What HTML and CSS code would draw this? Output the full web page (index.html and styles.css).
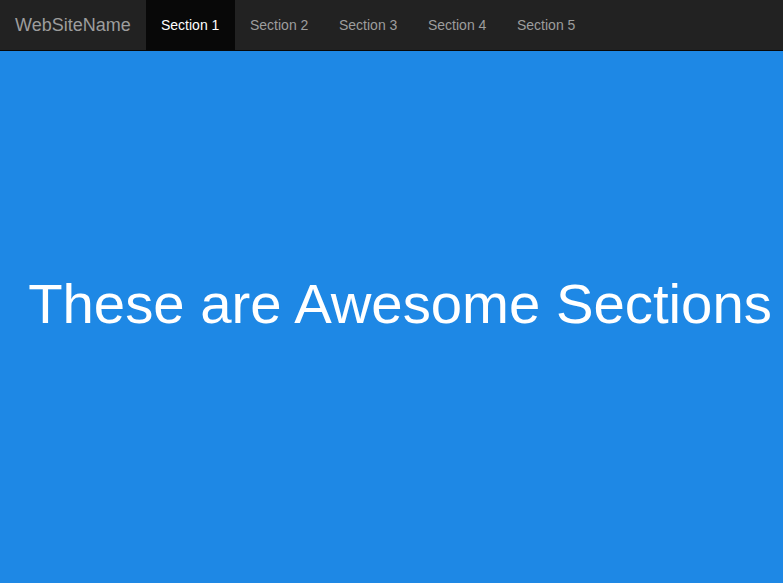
FILE: index.html
```html
<!DOCTYPE html>
<html>
<head>
<meta charset="utf-8">
<link rel="stylesheet" href="styles.css">
</head>
<body>
<nav class="navbar">
  <a class="brand" href="#">WebSiteName</a>
  <ul class="nav">
    <li class="active"><a href="#">Section 1</a></li>
    <li><a href="#">Section 2</a></li>
    <li><a href="#">Section 3</a></li>
    <li><a href="#">Section 4</a></li>
    <li><a href="#">Section 5</a></li>
  </ul>
</nav>
<section class="hero">
  <h1 class="title">These are Awesome Sections</h1>
</section>
</body>
</html>
```

FILE: styles.css
```css
html, body {
  margin: 0;
  padding: 0;
  height: 100%;
}
body {
  font-family: "Liberation Sans", Arial, sans-serif;
  font-size: 14px;
  line-height: 1.42857;
  background: #1E88E5;
  overflow: hidden;
}
.navbar {
  display: flex;
  height: 50px;
  background: #222222;
  border-bottom: 1px solid #080808;
}
.brand {
  display: block;
  width: 146px;
  height: 50px;
  box-sizing: border-box;
  padding: 15px;
  font-size: 18px;
  line-height: 20px;
  color: #9d9d9d;
  text-decoration: none;
}
.nav {
  display: flex;
  list-style: none;
  margin: 0;
  padding: 0;
}
.nav a {
  display: block;
  width: 89px;
  box-sizing: border-box;
  padding: 15px;
  line-height: 20px;
  color: #9d9d9d;
  text-decoration: none;
}
.nav .active a {
  background: #080808;
  color: #ffffff;
}
.hero {
  background: #1E88E5;
  padding: 222px 0 0 17px;
  text-align: center;
}
.title {
  margin: 0;
  font-size: 56.3px;
  line-height: 1.1;
  font-weight: 400;
  color: #ffffff;
  white-space: nowrap;
}
```
